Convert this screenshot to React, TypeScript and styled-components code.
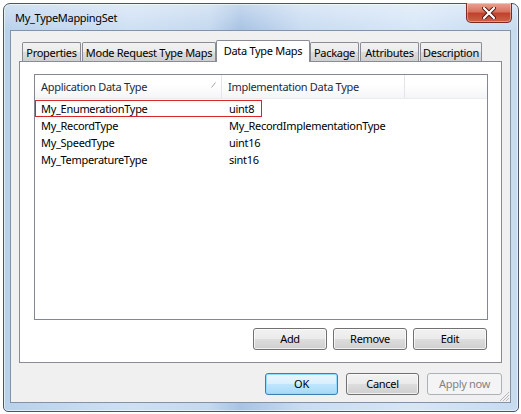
import React from "react";
import styled, { createGlobalStyle, css } from "styled-components";

const FONT = `"Noto Sans", "Open Sans", sans-serif`;

const GlobalStyle = createGlobalStyle`
  html, body { margin: 0; padding: 0; background: #ffffff; }
  body { font-family: ${FONT}; font-size: 11px; letter-spacing: -0.3px; color: #000; }
  * { box-sizing: border-box; }
`;

const Window = styled.div`
  position: relative;
  margin: 3px 0 0 3px;
  width: 516px;
  height: 409px;
  border: 1px solid #4a5666;
  border-radius: 7px 7px 5px 5px;
  background:
    linear-gradient(180deg, rgba(255,255,255,0.35) 0px, rgba(255,255,255,0) 26px),
    linear-gradient(90deg, #b9d1ec 0%, #cfe0f4 25%, #c4d8ef 40%, #a8c3e4 46%, #c9dcf2 58%, #d7e6f7 80%, #c6daf1 100%);
  box-shadow: inset 0 0 0 1px rgba(255,255,255,0.55);
  padding: 26px 7px 8px 6px;
  display: flex;
  flex-direction: column;
`;

const TitleBar = styled.div`
  position: absolute;
  left: 11px;
  top: 6px;
  color: #000;
  line-height: 16px;
`;

const CloseButton = styled.div`
  position: absolute;
  top: -1px;
  right: 6px;
  width: 46px;
  height: 20px;
  border: 1px solid #7a2a22;
  border-top: none;
  border-radius: 0 0 5px 5px;
  background: linear-gradient(180deg, #e8a493 0%, #d6745f 45%, #c0422c 55%, #d0614a 100%);
  box-shadow: inset 0 0 0 1px rgba(255,255,255,0.35);
  display: flex;
  align-items: center;
  justify-content: center;
`;

const Client = styled.div`
  position: relative;
  flex: 1;
  border: 1px solid #8193a8;
  background: #f0f0f0;
  padding: 9px 8px 7px 8px;
  display: flex;
  flex-direction: column;
`;

const TabStrip = styled.div`
  display: flex;
  align-items: flex-end;
  height: 21px;
  padding-left: 3px;
  position: relative;
  z-index: 1;
`;

const Tab = styled.div<{ $w: number; $active?: boolean }>`
  width: ${(p) => p.$w}px;
  flex-shrink: 0;
  height: 19px;
  margin-right: 1px;
  border: 1px solid #898c95;
  border-bottom: none;
  border-radius: 2px 2px 0 0;
  background: linear-gradient(180deg, #f2f2f2 0%, #ebebeb 50%, #dddddd 51%, #cfcfcf 100%);
  display: flex;
  align-items: center;
  justify-content: center;
  white-space: nowrap;
  line-height: 16px;
  padding-top: 1px;
  ${(p) =>
    p.$active &&
    css`
      height: 22px;
      margin-bottom: -1px;
      margin-left: -1px;
      margin-right: 0;
      background: #ffffff;
      align-items: flex-start;
      padding-top: 2px;
    `}
`;

const Panel = styled.div`
  width: 483px;
  height: 302px;
  border: 1px solid #898c95;
  background: #ffffff;
  padding: 12px 13px 0 14px;
  display: flex;
  flex-direction: column;
`;

const List = styled.div`
  width: 454px;
  height: 246px;
  border: 1px solid #828790;
  background: #ffffff;
  display: flex;
  flex-direction: column;
`;

const Header = styled.div`
  display: flex;
  height: 24px;
  background: linear-gradient(180deg, #ffffff 0%, #ffffff 40%, #f4f5f7 100%);
  border-bottom: 1px solid #ebecee;
`;

const HeaderCell = styled.div<{ $w?: number; $last?: boolean }>`
  position: relative;
  ${(p) => (p.$w ? `width: ${p.$w}px; flex-shrink: 0;` : "flex: 1;")}
  border-right: ${(p) => (p.$last ? "none" : "1px solid #e3e5e8")};
  padding-left: 6px;
  display: flex;
  align-items: center;
  color: #1c2a3a;
  white-space: nowrap;
`;

const SortMark = styled.svg`
  position: absolute;
  right: 5px;
  top: 7px;
`;

const Rows = styled.div`
  padding-top: 1px;
  display: flex;
  flex-direction: column;
`;

const Row = styled.div<{ $focus?: boolean }>`
  display: flex;
  width: 227px;
  height: 17px;
  border: 1px solid ${(p) => (p.$focus ? "#d8252b" : "transparent")};
  align-items: center;
  white-space: nowrap;
`;

const Cell1 = styled.div`
  width: 186px;
  flex-shrink: 0;
  padding-left: 5px;
`;

const Cell2 = styled.div`
  flex-shrink: 0;
  padding-left: 7px;
`;

const PanelButtons = styled.div`
  display: flex;
  justify-content: flex-end;
  gap: 6px;
  margin-top: 8px;
  padding-right: 1px;
`;

const Button = styled.button<{ $variant?: "default" | "disabled"; $w?: number }>`
  width: ${(p) => p.$w ?? 74}px;
  height: 22px;
  border: 1px solid #707070;
  border-radius: 3px;
  background: linear-gradient(180deg, #f2f2f2 0%, #ebebeb 48%, #dddddd 52%, #cfcfcf 100%);
  box-shadow: inset 0 0 0 1px rgba(255,255,255,0.7);
  font-family: ${FONT};
  font-size: 11px;
  letter-spacing: -0.3px;
  color: #000;
  padding: 0 0 1px 0;
  display: flex;
  align-items: center;
  justify-content: center;
  ${(p) =>
    p.$variant === "default" &&
    css`
      border-color: #3c7fb1;
      background: linear-gradient(180deg, #eaf6fd 0%, #d9f0fc 48%, #bee6fd 52%, #a7d9f5 100%);
      box-shadow: inset 0 0 0 1px #8fdcff;
    `}
  ${(p) =>
    p.$variant === "disabled" &&
    css`
      border-color: #adb2b5;
      background: #f4f4f4;
      box-shadow: none;
      color: #838383;
    `}
`;

const DialogButtons = styled.div`
  display: flex;
  justify-content: flex-end;
  gap: 8px;
  margin-top: 10px;
`;

const Grip = styled.svg`
  position: absolute;
  right: 0;
  bottom: 0;
`;

const rows = [
  ["My_EnumerationType", "uint8"],
  ["My_RecordType", "My_RecordImplementationType"],
  ["My_SpeedType", "uint16"],
  ["My_TemperatureType", "sint16"],
];

const tabs: { label: string; w: number; active?: boolean }[] = [
  { label: "Properties", w: 59 },
  { label: "Mode Request Type Maps", w: 134 },
  { label: "Data Type Maps", w: 94, active: true },
  { label: "Package", w: 49 },
  { label: "Attributes", w: 59 },
  { label: "Description", w: 62 },
];

export default function App() {
  return (
    <>
      <GlobalStyle />
      <Window>
        <TitleBar>My_TypeMappingSet</TitleBar>
        <CloseButton>
          <svg width="14" height="12" viewBox="0 0 14 12">
            <path d="M2 1 L12 11 M12 1 L2 11" stroke="#4a1a14" strokeWidth="4" strokeLinecap="round" />
            <path d="M2 1 L12 11 M12 1 L2 11" stroke="#ffffff" strokeWidth="2.2" strokeLinecap="round" />
          </svg>
        </CloseButton>
        <Client>
          <TabStrip>
            {tabs.map((t) => (
              <Tab key={t.label} $w={t.w} $active={t.active}>
                {t.label}
              </Tab>
            ))}
          </TabStrip>
          <Panel>
            <List>
              <Header>
                <HeaderCell $w={187}>
                  Application Data Type
                  <SortMark width="5" height="6" viewBox="0 0 5 6">
                    <path d="M0.5 5.5 L4.5 0.5" stroke="#a0a6ad" strokeWidth="1" />
                  </SortMark>
                </HeaderCell>
                <HeaderCell $w={183}>Implementation Data Type</HeaderCell>
                <HeaderCell $last />
              </Header>
              <Rows>
                {rows.map(([a, b], i) => (
                  <Row key={a} $focus={i === 0}>
                    <Cell1>{a}</Cell1>
                    <Cell2>{b}</Cell2>
                  </Row>
                ))}
              </Rows>
            </List>
            <PanelButtons>
              <Button>Add</Button>
              <Button>Remove</Button>
              <Button>Edit</Button>
            </PanelButtons>
          </Panel>
          <DialogButtons>
            <Button $variant="default" $w={73}>OK</Button>
            <Button $w={73}>Cancel</Button>
            <Button $variant="disabled" $w={75}>Apply now</Button>
          </DialogButtons>
          <Grip width="12" height="12" viewBox="0 0 12 12">
            <path d="M11 2 L2 11 M11 5 L5 11 M11 8 L8 11" stroke="#b5b9bf" strokeWidth="1" />
          </Grip>
        </Client>
      </Window>
    </>
  );
}
